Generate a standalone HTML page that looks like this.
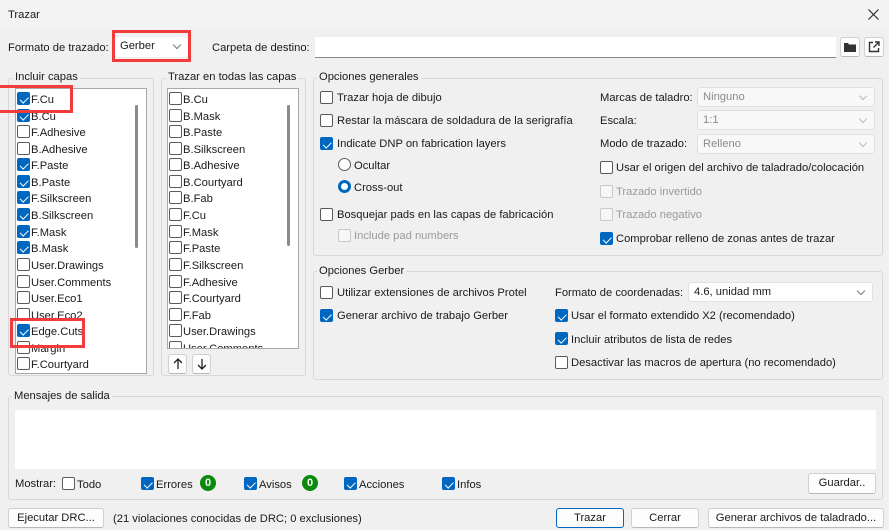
<!DOCTYPE html>
<html><head><meta charset="utf-8"><style>
*{box-sizing:border-box;margin:0;padding:0}
body{width:889px;height:530px;overflow:hidden;background:#f0f0f0;font-family:"Liberation Sans",sans-serif;font-size:11.2px;color:#1a1a1a;position:relative}
.a{position:absolute;white-space:nowrap}
.t{position:absolute;white-space:nowrap;line-height:14px;margin-top:1px}
.cb{position:absolute;width:13px;height:13px;border:1px solid #5a5a5a;border-radius:2px;background:#fff}
.cb.c{background:#0067c0;border-color:#0067c0}
.cb.c::after{content:"";position:absolute;left:3.5px;top:1.5px;width:3.5px;height:6.5px;border:solid #fff;border-width:0 1.2px 1.2px 0;transform:rotate(45deg)}
.cb.d{border-color:#c8c8c8;background:#f7f7f7}
.grp{position:absolute;border:1px solid #d8d8d8;border-radius:3px}
.gl{position:absolute;background:#f0f0f0;padding:0 2px;line-height:14px}
.list{position:absolute;background:#fff;border:1px solid #a8a8a8;overflow:hidden}
.btn{position:absolute;background:#fdfdfd;border:1px solid #d0d0d0;border-bottom-color:#b8b8b8;border-radius:3px;text-align:center;line-height:18px}
.dd{position:absolute;background:#fff;border:1px solid #e0e0e0;border-radius:3px;padding-left:5px;line-height:18px}
.dd::after{content:"";position:absolute;right:8px;top:5px;width:5px;height:5px;border:solid #777;border-width:0 1px 1px 0;transform:rotate(45deg)}
.dd.dis{background:#f8f8f8;color:#8a8a8a}
.dd.dis::after{border-color:#bbb}
.gr{color:#9a9a9a}
.red{position:absolute;border:3.5px solid #f23c3c}
.badge{position:absolute;width:16px;height:16px;border-radius:50%;background:#0a8a0a;color:#fff;font-weight:bold;font-size:11px;text-align:center;line-height:16px}
.sb{position:absolute;width:3px;background:#8a8a8a;border-radius:2px}
</style></head><body>
<div class="a" style="left:0;top:0;width:889px;height:30px;background:#f3f3f3"></div>
<div class="t" style="left:8px;top:7px">Trazar</div>
<svg class="a" style="left:868px;top:9px" width="11" height="11" viewBox="0 0 11 11"><path d="M0.5 0.5L10.5 10.5M10.5 0.5L0.5 10.5" stroke="#222" stroke-width="1.1"/></svg>

<div class="t" style="left:8px;top:40px">Formato de trazado:</div>
<div class="dd" style="left:115px;top:37px;width:73px;height:20px;border:none">Gerber</div>
<div class="red" style="left:112px;top:30px;width:79px;height:32px"></div>
<div class="t" style="left:212px;top:40px">Carpeta de destino:</div>
<div class="a" style="left:315px;top:37px;width:521px;height:21px;background:#fff;border-bottom:1px solid #888"></div>
<div class="btn" style="left:840px;top:37px;width:20px;height:20px"><svg width="12" height="10" viewBox="0 0 12 10" style="margin-top:4px"><path d="M0 1h4l1 1.5h7v7.5H0z" fill="#333"/></svg></div>
<div class="btn" style="left:864px;top:37px;width:20px;height:20px"><svg width="12" height="12" viewBox="0 0 12 12" style="margin-top:3px"><path d="M5 1.5H1.5v9h9V7M7 1h4v4M11 1L5.5 6.5" fill="none" stroke="#333" stroke-width="1.4"/></svg></div>

<div class="grp" style="left:8px;top:78px;width:146px;height:298px"></div>
<div class="gl" style="left:13px;top:70px">Incluir capas</div>
<div class="list" style="left:15px;top:88px;width:132px;height:286px"></div>
<div class="sb" style="left:135px;top:105px;height:143px"></div>

<div class="grp" style="left:161px;top:78px;width:145px;height:298px"></div>
<div class="gl" style="left:166px;top:70px">Trazar en todas las capas</div>
<div class="list" style="left:167px;top:88px;width:132px;height:261px"></div>
<div class="sb" style="left:287px;top:105px;height:141px"></div>
<div class="btn" style="left:168px;top:354px;width:19px;height:20px"><svg width="10" height="12" viewBox="0 0 10 12" style="margin-top:3px"><path d="M5 11V1M1 5l4-4 4 4" fill="none" stroke="#222" stroke-width="1.3"/></svg></div>
<div class="btn" style="left:192px;top:354px;width:19px;height:20px"><svg width="10" height="12" viewBox="0 0 10 12" style="margin-top:3px"><path d="M5 1v10M1 7l4 4 4-4" fill="none" stroke="#222" stroke-width="1.3"/></svg></div>

<div class="grp" style="left:313px;top:78px;width:570px;height:178px"></div>
<div class="gl" style="left:317px;top:70px">Opciones generales</div>
<div class="cb" style="left:320px;top:91px"></div><div class="t" style="left:337px;top:90px">Trazar hoja de dibujo</div>
<div class="cb" style="left:320px;top:114px"></div><div class="t" style="left:337px;top:113px">Restar la máscara de soldadura de la serigrafía</div>
<div class="cb c" style="left:320px;top:137px"></div><div class="t" style="left:337px;top:136px">Indicate DNP on fabrication layers</div>
<div class="a" style="left:338px;top:158px;width:13px;height:13px;border:1px solid #5a5a5a;border-radius:50%;background:#fff"></div><div class="t" style="left:354px;top:158px">Ocultar</div>
<div class="a" style="left:338px;top:180px;width:13px;height:13px;border:3.5px solid #0067c0;border-radius:50%;background:#fff"></div><div class="t" style="left:354px;top:180px">Cross-out</div>
<div class="cb" style="left:320px;top:208px"></div><div class="t" style="left:337px;top:207px">Bosquejar pads en las capas de fabricación</div>
<div class="cb d" style="left:338px;top:229px"></div><div class="t gr" style="left:354px;top:228px">Include pad numbers</div>

<div class="t" style="left:600px;top:90px">Marcas de taladro:</div>
<div class="dd dis" style="left:697px;top:87px;width:178px;height:20px">Ninguno</div>
<div class="t" style="left:600px;top:113px">Escala:</div>
<div class="dd dis" style="left:697px;top:110px;width:178px;height:20px">1:1</div>
<div class="t" style="left:600px;top:136px">Modo de trazado:</div>
<div class="dd dis" style="left:697px;top:134px;width:178px;height:20px">Relleno</div>
<div class="cb" style="left:600px;top:161px"></div><div class="t" style="left:616px;top:160px">Usar el origen del archivo de taladrado/colocación</div>
<div class="cb d" style="left:600px;top:185px"></div><div class="t gr" style="left:616px;top:184px">Trazado invertido</div>
<div class="cb d" style="left:600px;top:208px"></div><div class="t gr" style="left:616px;top:207px">Trazado negativo</div>
<div class="cb c" style="left:600px;top:232px"></div><div class="t" style="left:616px;top:231px">Comprobar relleno de zonas antes de trazar</div>

<div class="grp" style="left:313px;top:271px;width:570px;height:109px"></div>
<div class="gl" style="left:317px;top:264px">Opciones Gerber</div>
<div class="cb" style="left:320px;top:286px"></div><div class="t" style="left:337px;top:285px">Utilizar extensiones de archivos Protel</div>
<div class="cb c" style="left:320px;top:309px"></div><div class="t" style="left:337px;top:308px">Generar archivo de trabajo Gerber</div>
<div class="t" style="left:555px;top:285px">Formato de coordenadas:</div>
<div class="dd" style="left:688px;top:282px;width:185px;height:20px">4.6, unidad mm</div>
<div class="cb c" style="left:555px;top:309px"></div><div class="t" style="left:571px;top:308px">Usar el formato extendido X2 (recomendado)</div>
<div class="cb c" style="left:555px;top:332px"></div><div class="t" style="left:571px;top:332px">Incluir atributos de lista de redes</div>
<div class="cb" style="left:555px;top:356px"></div><div class="t" style="left:571px;top:355px">Desactivar las macros de apertura (no recomendado)</div>

<div class="grp" style="left:8px;top:396px;width:875px;height:104px"></div>
<div class="gl" style="left:12px;top:389px">Mensajes de salida</div>
<div class="a" style="left:15px;top:410px;width:861px;height:59px;background:#fff"></div>
<div class="t" style="left:15px;top:476px">Mostrar:</div>
<div class="cb" style="left:62px;top:477px"></div><div class="t" style="left:77px;top:477px">Todo</div>
<div class="cb c" style="left:141px;top:477px"></div><div class="t" style="left:156px;top:477px">Errores</div><div class="badge" style="left:200px;top:475px">0</div>
<div class="cb c" style="left:244px;top:477px"></div><div class="t" style="left:259px;top:477px">Avisos</div><div class="badge" style="left:302px;top:475px">0</div>
<div class="cb c" style="left:344px;top:477px"></div><div class="t" style="left:359px;top:477px">Acciones</div>
<div class="cb c" style="left:442px;top:477px"></div><div class="t" style="left:457px;top:477px">Infos</div>
<div class="btn" style="left:808px;top:473px;width:68px;height:21px">Guardar..</div>

<div class="btn" style="left:8px;top:508px;width:96px;height:20px">Ejecutar DRC...</div>
<div class="t" style="left:113px;top:511px">(21 violaciones conocidas de DRC; 0 exclusiones)</div>
<div class="btn" style="left:556px;top:508px;width:68px;height:20px;border-color:#0067c0">Trazar</div>
<div class="btn" style="left:631px;top:508px;width:68px;height:20px">Cerrar</div>
<div class="btn" style="left:708px;top:508px;width:176px;height:20px">Generar archivos de taladrado...</div>

<div class="cb c" style="left:17px;top:92px"></div><div class="t" style="left:31px;top:92px">F.Cu</div>
<div class="cb c" style="left:17px;top:109px"></div><div class="t" style="left:31px;top:109px">B.Cu</div>
<div class="cb" style="left:17px;top:125px"></div><div class="t" style="left:31px;top:125px">F.Adhesive</div>
<div class="cb" style="left:17px;top:142px"></div><div class="t" style="left:31px;top:142px">B.Adhesive</div>
<div class="cb c" style="left:17px;top:158px"></div><div class="t" style="left:31px;top:158px">F.Paste</div>
<div class="cb c" style="left:17px;top:175px"></div><div class="t" style="left:31px;top:175px">B.Paste</div>
<div class="cb c" style="left:17px;top:191px"></div><div class="t" style="left:31px;top:191px">F.Silkscreen</div>
<div class="cb c" style="left:17px;top:208px"></div><div class="t" style="left:31px;top:208px">B.Silkscreen</div>
<div class="cb c" style="left:17px;top:225px"></div><div class="t" style="left:31px;top:225px">F.Mask</div>
<div class="cb c" style="left:17px;top:241px"></div><div class="t" style="left:31px;top:241px">B.Mask</div>
<div class="cb" style="left:17px;top:258px"></div><div class="t" style="left:31px;top:258px">User.Drawings</div>
<div class="cb" style="left:17px;top:275px"></div><div class="t" style="left:31px;top:275px">User.Comments</div>
<div class="cb" style="left:17px;top:291px"></div><div class="t" style="left:31px;top:291px">User.Eco1</div>
<div class="cb" style="left:17px;top:308px"></div><div class="t" style="left:31px;top:308px">User.Eco2</div>
<div class="cb c" style="left:17px;top:324px"></div><div class="t" style="left:31px;top:324px">Edge.Cuts</div>
<div class="cb" style="left:17px;top:341px"></div><div class="t" style="left:31px;top:341px">Margin</div>
<div class="cb" style="left:17px;top:357px"></div><div class="t" style="left:31px;top:357px">F.Courtyard</div>
<div class="red" style="left:0;top:85px;width:73px;height:28px;border-left:none"></div>
<div class="red" style="left:10px;top:318px;width:75px;height:30px"></div>

<div class="a" style="left:168px;top:89px;width:118px;height:259px;overflow:hidden">
<div class="cb" style="left:1px;top:3px"></div><div class="t" style="left:15px;top:3px">B.Cu</div>
<div class="cb" style="left:1px;top:20px"></div><div class="t" style="left:15px;top:20px">B.Mask</div>
<div class="cb" style="left:1px;top:36px"></div><div class="t" style="left:15px;top:36px">B.Paste</div>
<div class="cb" style="left:1px;top:53px"></div><div class="t" style="left:15px;top:53px">B.Silkscreen</div>
<div class="cb" style="left:1px;top:69px"></div><div class="t" style="left:15px;top:69px">B.Adhesive</div>
<div class="cb" style="left:1px;top:86px"></div><div class="t" style="left:15px;top:86px">B.Courtyard</div>
<div class="cb" style="left:1px;top:102px"></div><div class="t" style="left:15px;top:102px">B.Fab</div>
<div class="cb" style="left:1px;top:119px"></div><div class="t" style="left:15px;top:119px">F.Cu</div>
<div class="cb" style="left:1px;top:136px"></div><div class="t" style="left:15px;top:136px">F.Mask</div>
<div class="cb" style="left:1px;top:152px"></div><div class="t" style="left:15px;top:152px">F.Paste</div>
<div class="cb" style="left:1px;top:169px"></div><div class="t" style="left:15px;top:169px">F.Silkscreen</div>
<div class="cb" style="left:1px;top:186px"></div><div class="t" style="left:15px;top:186px">F.Adhesive</div>
<div class="cb" style="left:1px;top:202px"></div><div class="t" style="left:15px;top:202px">F.Courtyard</div>
<div class="cb" style="left:1px;top:219px"></div><div class="t" style="left:15px;top:219px">F.Fab</div>
<div class="cb" style="left:1px;top:235px"></div><div class="t" style="left:15px;top:235px">User.Drawings</div>
<div class="cb" style="left:1px;top:252px"></div><div class="t" style="left:15px;top:252px">User.Comments</div>
</div>
</body></html>
